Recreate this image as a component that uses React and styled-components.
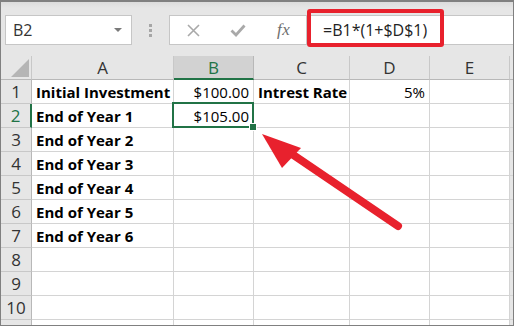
import React from "react";
import styled, { createGlobalStyle } from "styled-components";

const Global = createGlobalStyle`
  html, body { margin: 0; padding: 0; background: #fff; overflow: hidden; }
  * { box-sizing: border-box; }
`;

const Frame = styled.div`
  position: relative;
  width: 514px;
  height: 326px;
  border: 1px solid #808080;
  border-top-width: 2px;
  background: #e6e6e6;
  overflow: hidden;
  font-family: "Open Sans", "Noto Sans", Arial, sans-serif;
`;

const Toolbar = styled.div`
  height: 54px;
  display: flex;
  align-items: flex-start;
  padding: 13px 0 0 4px;
  background: linear-gradient(#dcdcdc, #e6e6e6 6px);
`;

const NameBox = styled.div`
  width: 127px;
  height: 30px;
  background: #fff;
  border: 1px solid #c6c6c6;
  display: flex;
  align-items: center;
  justify-content: space-between;
  padding: 0 9px 0 7px;
  font-size: 16px;
  color: #333;
`;

const Caret = styled.span`
  width: 0;
  height: 0;
  border-left: 4px solid transparent;
  border-right: 4px solid transparent;
  border-top: 4px solid #7a7a7a;
`;

const Grip = styled.div`
  width: 37px;
  height: 30px;
  display: flex;
  flex-direction: column;
  align-items: center;
  justify-content: center;
  gap: 2px;
  padding-right: 1px;
  span {
    width: 3px;
    height: 3px;
    background: #a6a6a6;
  }
`;

const FormulaBar = styled.div`
  flex: 1;
  height: 30px;
  display: flex;
  background: #fff;
  border: 1px solid #c6c6c6;
  border-right: none;
`;

const Buttons = styled.div`
  width: 137px;
  display: flex;
  align-items: center;
  border-right: 1px solid #c6c6c6;
  padding-left: 16px;
`;

const IconSlot = styled.div`
  width: ${(p) => p.$w}px;
  display: flex;
  align-items: center;
  justify-content: center;
`;

const Fx = styled.span`
  font-family: "Liberation Serif", "DejaVu Serif", serif;
  font-style: italic;
  font-size: 17px;
  color: #6e6e6e;
  letter-spacing: 0.5px;
  margin-left: -2px;
`;

const Formula = styled.div`
  position: relative;
  flex: 1;
  display: flex;
  align-items: center;
  padding-left: 16px;
  font-size: 16px;
  color: #222;
`;

const Highlight = styled.div`
  position: absolute;
  left: 0px;
  top: -7px;
  width: 137px;
  height: 38px;
  border: 4px solid #e8212d;
  border-radius: 3px;
`;

const Sheet = styled.div`
  display: grid;
  grid-template-columns: 31px 142px 80px 96px 80px 80px 1fr;
  grid-auto-rows: 24px;
  background: #fff;
`;

const Cell = styled.div`
  position: relative;
  display: flex;
  align-items: center;
  justify-content: ${(p) => (p.$right ? "flex-end" : "flex-start")};
  padding: 0 ${(p) => (p.$right ? "4px" : "0")} 0 ${(p) => (p.$right ? "0" : "4px")};
  border-right: 1px solid #d4d4d4;
  border-bottom: 1px solid #d4d4d4;
  font-size: 15px;
  font-weight: ${(p) => (p.$num ? 400 : 700)};
  color: #000;
  white-space: nowrap;
  ${(p) =>
    p.$sel &&
    `
    &::after {
      content: "";
      position: absolute;
      left: -2px; top: -2px; right: -1px; bottom: -1px;
      border: 2px solid #217346;
      pointer-events: none;
    }
    &::before {
      content: "";
      position: absolute;
      right: -4px; bottom: -4px;
      width: 6px; height: 6px;
      background: #217346;
      border: 1px solid #fff;
      z-index: 2;
    }
  `}
`;

const ColHead = styled.div`
  display: flex;
  align-items: center;
  justify-content: center;
  background: ${(p) => (p.$active ? "#d2d2d2" : "#e6e6e6")};
  color: ${(p) => (p.$active ? "#217346" : "#333")};
  border-right: ${(p) => (p.$last ? "none" : p.$active ? "1px solid #b8b8b8" : "1px solid #c8c8c8")};
  border-bottom: ${(p) => (p.$active ? "2px solid #217346" : "1px solid #b8b8b8")};
  font-size: 17px;
`;

const Corner = styled.div`
  position: relative;
  background: #e6e6e6;
  border-right: 1px solid #c8c8c8;
  border-bottom: 1px solid #b8b8b8;
  &::after {
    content: "";
    position: absolute;
    right: 2px;
    bottom: 2px;
    width: 0;
    height: 0;
    border-left: 18px solid transparent;
    border-bottom: 18px solid #b5b5b5;
  }
`;

const RowHead = styled.div`
  display: flex;
  align-items: center;
  justify-content: center;
  background: #e6e6e6;
  color: ${(p) => (p.$active ? "#217346" : "#333")};
  border-right: ${(p) => (p.$active ? "2px solid #217346" : "1px solid #b8b8b8")};
  border-bottom: 1px solid #c8c8c8;
  font-size: 17px;
`;

const Filler = styled.div`
  background: #e6e6e6;
  border-bottom: 1px solid #d4d4d4;
`;

const Arrow = styled.svg`
  position: absolute;
  left: 0;
  top: 0;
  pointer-events: none;
`;

const cols = ["A", "B", "C", "D", "E"];
const rows = [
  ["Initial Investment", "$100.00", "Intrest Rate", "5%", ""],
  ["End of Year 1", "$105.00", "", "", ""],
  ["End of Year 2", "", "", "", ""],
  ["End of Year 3", "", "", "", ""],
  ["End of Year 4", "", "", "", ""],
  ["End of Year 5", "", "", "", ""],
  ["End of Year 6", "", "", "", ""],
  ["", "", "", "", ""],
  ["", "", "", "", ""],
  ["", "", "", "", ""],
  ["", "", "", "", ""],
];

export default function App() {
  return (
    <>
      <Global />
      <Frame>
        <Toolbar>
          <NameBox>
            <span>B2</span>
            <Caret />
          </NameBox>
          <Grip>
            <span />
            <span />
            <span />
          </Grip>
          <FormulaBar>
            <Buttons>
              <IconSlot $w={14}>
                <svg width="13" height="13" viewBox="0 0 13 13">
                  <path d="M1 1 L12 12 M12 1 L1 12" stroke="#a9a9a9" strokeWidth="1.6" />
                </svg>
              </IconSlot>
              <IconSlot $w={30} />
              <IconSlot $w={16}>
                <svg width="16" height="13" viewBox="0 0 16 13">
                  <path d="M1.5 6.5 L6 11 L14.5 1.5" stroke="#a9a9a9" strokeWidth="2.8" fill="none" />
                </svg>
              </IconSlot>
              <IconSlot $w={33} />
              <Fx>fx</Fx>
            </Buttons>
            <Formula>
              <Highlight />
              =B1*(1+$D$1)
            </Formula>
          </FormulaBar>
        </Toolbar>
        <Sheet>
          <Corner />
          {cols.map((c) => (
            <ColHead key={c} $active={c === "B"}>
              {c}
            </ColHead>
          ))}
          <ColHead $last />
          {rows.map((r, i) => (
            <React.Fragment key={i}>
              <RowHead $active={i === 1}>{i < 10 ? i + 1 : ""}</RowHead>
              {r.map((v, j) => {
                const right = j === 1 || j === 3;
                return (
                  <Cell key={j} $right={right} $num={right} $sel={i === 1 && j === 1}>
                    {v}
                  </Cell>
                );
              })}
              <Filler />
            </React.Fragment>
          ))}
        </Sheet>
        <Arrow width="514" height="326" viewBox="0 0 514 326">
          <line x1="397" y1="224" x2="285" y2="148" stroke="#e8212d" strokeWidth="8" strokeLinecap="round" />
          <polygon points="261,132 300,146 281,166" fill="#e8212d" />
        </Arrow>
      </Frame>
    </>
  );
}
